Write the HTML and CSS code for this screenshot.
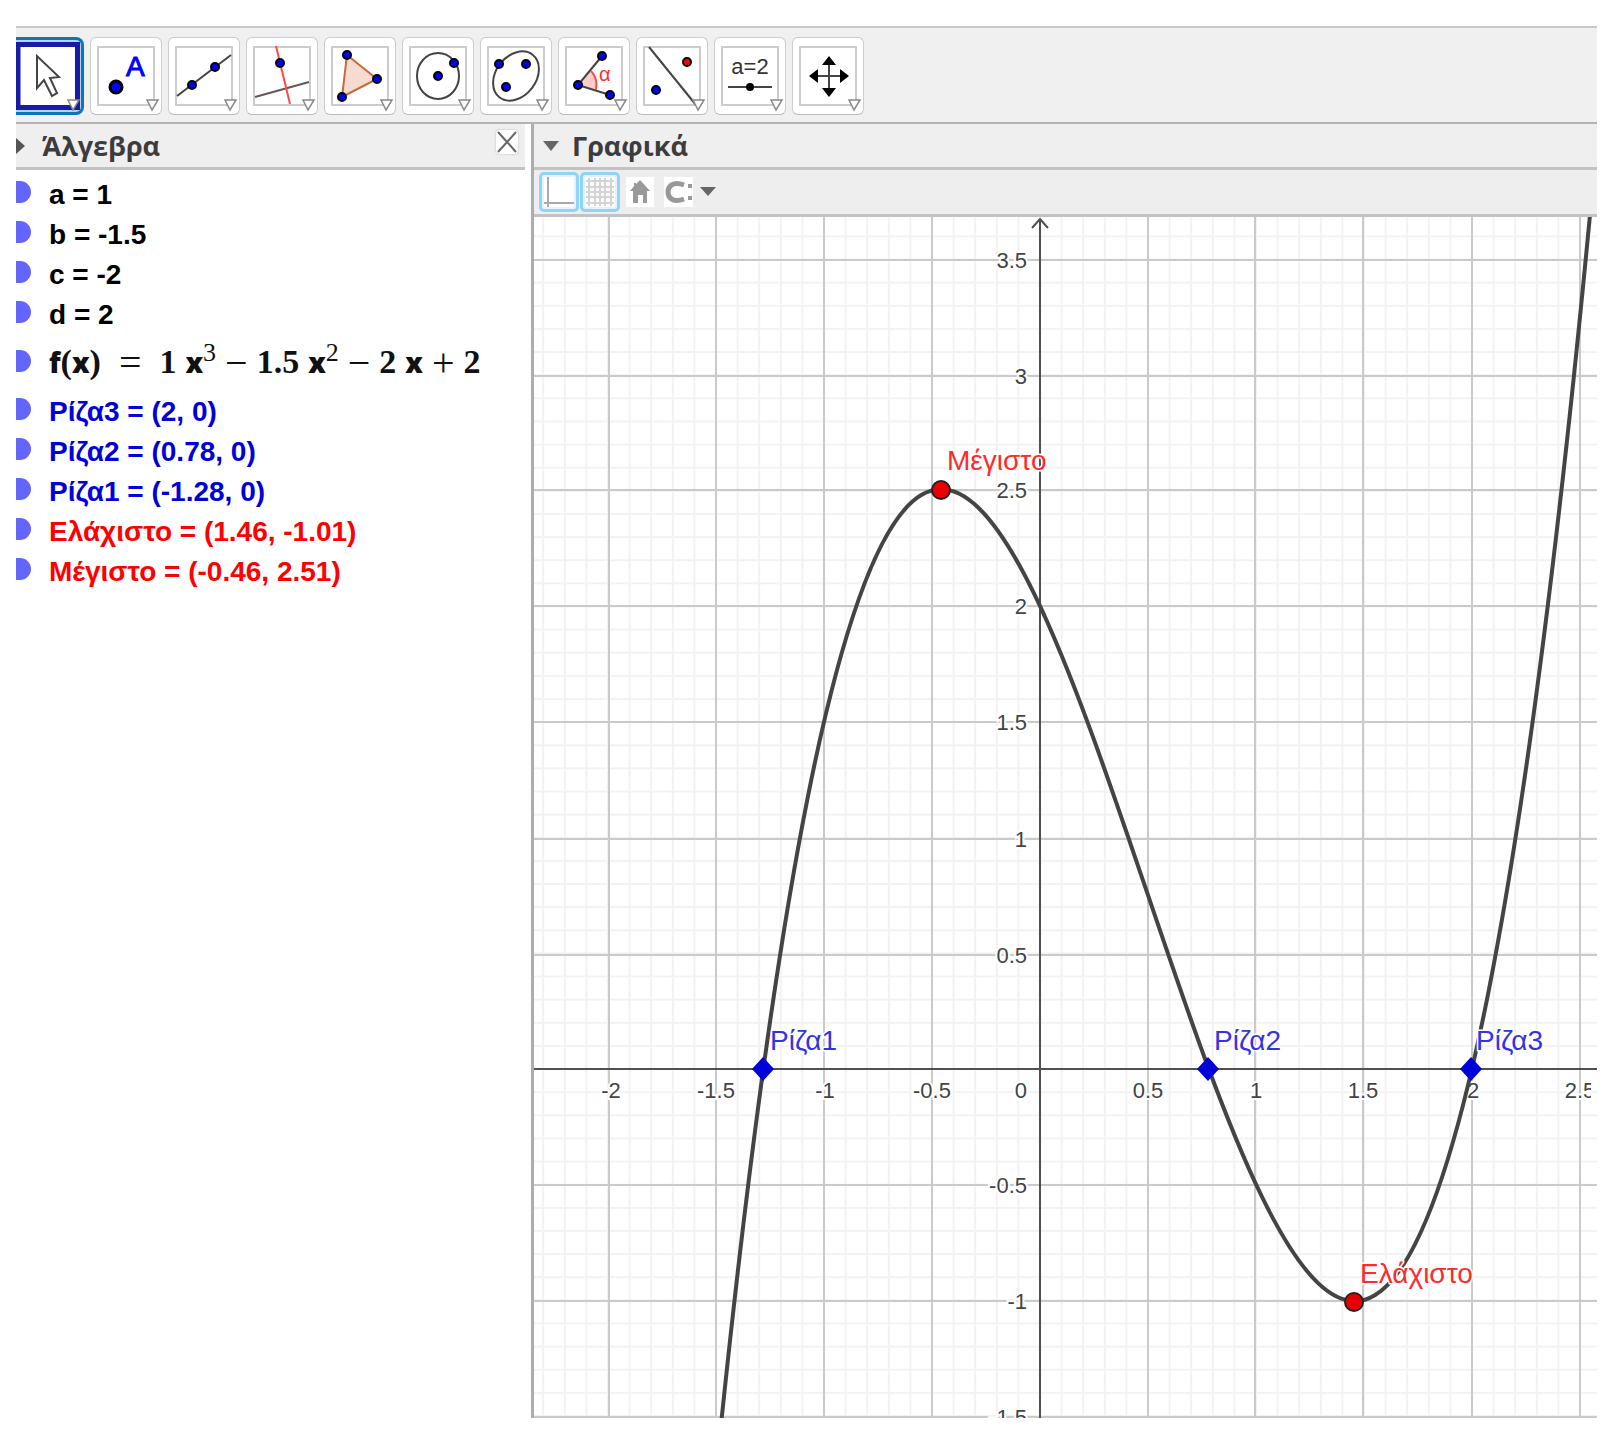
FILE: index.html
```html
<!DOCTYPE html>
<html lang="el">
<head>
<meta charset="utf-8">
<meta name="viewport" content="width=device-width, initial-scale=1">
<title>GeoGebra</title>
<link rel="stylesheet" href="styles.css">
</head>
<body>
<svg class="defs" aria-hidden="true">
  <defs>
    <g id="frame"><rect x="8" y="10" width="56" height="58" class="frame"/></g>
    <g id="more"><path d="M57 63H68L62 73Z" class="more"/></g>
    <g id="dot"><circle r="4" class="dot"/></g>
  </defs>
</svg>
<div class="app">
  <nav class="tools" aria-label="Εργαλεία">
    <button class="tool selected" aria-label="Μετακίνηση"><svg viewBox="0 0 65 72">
      <path d="M0 4.500H61.500V67.500H0" class="selected-frame"/><path d="M2 2V70" class="selected-frame"/>
      <path d="M21 16V48L28 40L36 56L41 53L34 38L43 37Z" class="cursor"/>
      <path d="M52 60H63L57 70Z" class="more"/></svg></button>
    <button class="tool" aria-label="Σημείο"><svg viewBox="1 1 70 76"><use href="#frame"/><circle cx="26" cy="50" r="6" class="dot big"/><text x="36" y="39" class="glyph-a">A</text><use href="#more"/></svg></button>
    <button class="tool" aria-label="Ευθεία"><svg viewBox="1 1 70 76"><use href="#frame"/><path d="M9 59L63 18" class="ink"/><use href="#dot" x="24" y="48"/><use href="#dot" x="47" y="30"/><use href="#more"/></svg></button>
    <button class="tool" aria-label="Κάθετη ευθεία"><svg viewBox="1 1 70 76"><use href="#frame"/><path d="M9 60L63 45" class="ink brown"/><path d="M30 9L44 67" class="ink red"/><use href="#dot" x="34" y="26"/><use href="#more"/></svg></button>
    <button class="tool" aria-label="Πολύγωνο"><svg viewBox="1 1 70 76"><use href="#frame"/><path d="M23 18L53 42L18 60Z" class="polygon"/><use href="#dot" x="23" y="18"/><use href="#dot" x="53" y="42"/><use href="#dot" x="18" y="60"/><use href="#more"/></svg></button>
    <button class="tool" aria-label="Κύκλος"><svg viewBox="1 1 70 76"><use href="#frame"/><ellipse cx="36" cy="39" rx="21" ry="23" class="ink"/><use href="#dot" x="36" y="39"/><use href="#dot" x="52" y="26"/><use href="#more"/></svg></button>
    <button class="tool" aria-label="Έλλειψη"><svg viewBox="1 1 70 76"><use href="#frame"/><ellipse cx="36" cy="39" rx="27" ry="20" transform="rotate(-52 36 39)" class="ink"/><use href="#dot" x="19" y="27"/><use href="#dot" x="46" y="27"/><use href="#dot" x="26" y="50"/><use href="#more"/></svg></button>
    <button class="tool" aria-label="Γωνία"><svg viewBox="1 1 70 76"><use href="#frame"/><path d="M20 48L33 34Q40 41 38 53Z" class="wedge"/><path d="M44 19L20 48L52 58" class="ink"/><path d="M33 34Q40 41 38 53" class="ink red"/><use href="#dot" x="20" y="48"/><use href="#dot" x="44" y="19"/><use href="#dot" x="52" y="58"/><text x="41" y="44" class="glyph-alpha">α</text><use href="#more"/></svg></button>
    <button class="tool" aria-label="Ανάκλαση"><svg viewBox="1 1 70 76"><use href="#frame"/><path d="M13 10L60 68" class="ink"/><use href="#dot" x="20" y="53"/><circle cx="51" cy="25" r="4" class="dot hot"/><use href="#more"/></svg></button>
    <button class="tool" aria-label="Δρομέας"><svg viewBox="1 1 70 76"><use href="#frame"/><text x="36" y="37" class="glyph-slider">a=2</text><path d="M14 50H58" class="ink"/><circle cx="36" cy="50" r="4"/><use href="#more"/></svg></button>
    <button class="tool" aria-label="Μετακίνηση γραφικών"><svg viewBox="1 1 70 76"><use href="#frame"/><path d="M24 39H50M37 27V52" class="ink"/><path d="M37 19L44 28H30ZM37 60L44 51H30ZM17 39L26 32V46ZM57 39L48 32V46Z"/><use href="#more"/></svg></button>
  </nav>
  <main class="views">
    <section class="algebra">
      <header class="bar">
        <svg class="tri-right" viewBox="0 0 9 16"><path d="M0 0L9 8L0 16Z"/></svg>
        <h2>Άλγεβρα</h2>
        <button class="close" aria-label="Κλείσιμο"><svg viewBox="0 0 22 24"><path d="M2 2L20 22M20 2L2 22"/></svg></button>
      </header>
      <ul class="objects">
        <li>a = 1</li>
        <li>b = -1.5</li>
        <li>c = -2</li>
        <li>d = 2</li>
        <li class="formula"><span class="math"><b>f</b>(<b>x</b>)<i class="wide">=</i>1<b class="var">x</b><sup>3</sup><i>−</i>1.5<b class="var">x</b><sup>2</sup><i>−</i>2<b class="var">x</b><i>+</i>2</span></li>
        <li class="root">Ρίζα3 = (2, 0)</li>
        <li class="root">Ρίζα2 = (0.78, 0)</li>
        <li class="root">Ρίζα1 = (-1.28, 0)</li>
        <li class="extremum">Ελάχιστο = (1.46, -1.01)</li>
        <li class="extremum">Μέγιστο = (-0.46, 2.51)</li>
      </ul>
    </section>
    <section class="graphics">
      <header class="bar">
        <svg class="tri-down" viewBox="0 0 16 10"><path d="M0 0H16L8 10Z"/></svg>
        <h2>Γραφικά</h2>
      </header>
      <div class="options">
        <button class="option on" aria-label="Άξονες"><svg viewBox="0 0 34 34"><rect x="2" y="2" width="30" height="30" fill="#fff"/><path d="M6 2V32M2 28H32" class="gray"/></svg></button>
        <button class="option on" aria-label="Πλέγμα"><svg viewBox="0 0 34 34"><rect x="2" y="2" width="30" height="30" fill="#fff"/><path d="M6 3V31M12 3V31M17 3V31M22 3V31M28 3V31M3 6H31M3 12H31M3 17H31M3 22H31M3 28H31" class="mesh"/></svg></button>
        <button class="option plain" aria-label="Αρχική προβολή"><svg viewBox="0 0 28 30"><path d="M14 3L24 14H21V26H17V18H12V26H7V14H4L8 9V6H10V7Z" fill="#999"/></svg></button>
        <button class="option snap" aria-label="Σύλληψη σημείου"><svg viewBox="0 0 52 30"><path d="M0 0H29V30H0Z" fill="#fff"/><path d="M20 8C9 4 4 9 4 15S9 26 20 22" fill="none" stroke="#999" stroke-width="5"/><path d="M24 7H28V11H24ZM24 19H28V23H24Z" fill="#999"/><path d="M36 10H52L44 19Z" fill="#666"/></svg></button>
      </div>
      <svg class="plot" viewBox="534 217 1063 1201" role="img" aria-label="Γραφική παράσταση">
        <defs>
          <pattern id="minor" patternUnits="userSpaceOnUse" x="1029.200" y="1057.500" width="21.600" height="23.130"><path d="M10.800 0V24M0 11.565H22" class="minor"/></pattern>
          <clipPath id="labels"><rect x="534" y="217" width="1057" height="1201"/></clipPath>
        </defs>
        <rect x="534" y="217" width="1063" height="1201" fill="url(#minor)"/>
        <path class="major" d="M609 217V1418M716 217V1418M824 217V1418M932 217V1418M1148 217V1418M1255 217V1418M1363 217V1418M1472 217V1418M1580 217V1418M534 260H1597M534 376H1597M534 490H1597M534 606H1597M534 722H1597M534 839H1597M534 955H1597M534 1185H1597M534 1301H1597M534 1417H1597"/>
        <path class="axis" d="M534 1069H1597M1040 1418V220M1032 228L1040 219L1048 228"/>
        <g class="ticks" clip-path="url(#labels)">
          <text x="611" y="1098">-2</text><text x="716" y="1098">-1.5</text><text x="825" y="1098">-1</text><text x="932" y="1098">-0.5</text>
          <text x="1148" y="1098">0.5</text><text x="1256" y="1098">1</text><text x="1363" y="1098">1.5</text><text x="1473" y="1098">2</text><text x="1580" y="1098">2.5</text>
          <g class="ticks-y">
            <text x="1027" y="268">3.5</text><text x="1027" y="384">3</text><text x="1027" y="498">2.5</text><text x="1027" y="614">2</text><text x="1027" y="730">1.5</text><text x="1027" y="847">1</text><text x="1027" y="963">0.5</text><text x="1027" y="1098">0</text><text x="1027" y="1193">-0.5</text><text x="1027" y="1309">-1</text><text x="1027" y="1425">-1.5</text>
          </g>
        </g>
        <path class="curve" d="M694.400 1701.500C996.800 -1692.100 1299.200 3482.500 1601.600 88.900"/>
        <path class="roots" d="M763 1057L774 1069L763 1081L752 1069ZM1208 1057L1219 1069L1208 1081L1197 1069ZM1471 1057L1482 1069L1471 1081L1460 1069Z"/>
        <circle class="peak" cx="941" cy="490" r="9"/><circle class="peak" cx="1354" cy="1302" r="9"/>
        <g class="names">
          <text x="770" y="1050">Ρίζα1</text><text x="1214" y="1050">Ρίζα2</text><text x="1476" y="1050">Ρίζα3</text>
          <text x="947" y="470" class="hot">Μέγιστο</text><text x="1360" y="1283" class="hot">Ελάχιστο</text>
        </g>
      </svg>
    </section>
  </main>
</div>
</body>
</html>
```
FILE: styles.css
```css
* { box-sizing: border-box; }
body { margin: 0; background: #fff; font-family: "Liberation Sans", Arial, sans-serif; color: #000; }
button { padding: 0; border: 0; background: none; font: inherit; }
svg { display: block; }
h2, ul { margin: 0; padding: 0; }
.defs { position: absolute; width: 0; height: 0; }
.app { padding: 26px 16px; }

.tools { display: flex; gap: 6px; padding: 9px 0 7px; overflow: hidden; background: #f0f0f0; border-top: 2px solid #c8c8c8; border-bottom: 2px solid #b2b2b2; }
.tool { flex: none; width: 72px; height: 78px; background: #fff; border: 1px solid #cdcdcd; border-bottom-color: #bbb; border-radius: 6px; }
.tool svg { width: 100%; height: 100%; }
.tool.selected { width: 68px; background: #b4d4f2; border: 3px solid #0a76b4; border-left: 0; border-radius: 0 8px 8px 0; }
.selected-frame { fill: none; stroke: #1a1aa8; stroke-width: 5; }
.tool.selected .selected-frame:first-child { fill: #fff; }
.cursor { fill: #fff; stroke: #444; stroke-width: 2; }
.frame { fill: #fff; stroke: #ccc; stroke-width: 2; }
.more { fill: #fff; stroke: #888; stroke-width: 1.5; }
.dot { fill: #00f; stroke: #000; stroke-width: 2; }
.dot.big { stroke-width: 3; }
.dot.hot { fill: #f00; }
.ink { fill: none; stroke: #444; stroke-width: 2; }
.ink.brown { stroke: #655; }
.ink.red { stroke: #ff4a4a; }
.polygon { fill: #f5dbd0; stroke: #c8693c; stroke-width: 2; }
.wedge { fill: #ffcccc; }
.glyph-a { font-size: 28px; fill: #00f; stroke: #00f; }
.glyph-alpha { font-size: 20px; fill: #f33; }
.glyph-slider { font-size: 22px; fill: #333; text-anchor: middle; }

.views { display: grid; grid-template-columns: 509px minmax(0, 1fr); column-gap: 6px; }
.graphics { border-left: 3px solid #adadad; }
.bar { display: flex; align-items: center; height: 46px; background: #efefef; border-bottom: 3px solid #c2c2c2; color: #3c3c3c; }
.bar h2 { font: 700 27px/40px "Open Sans", "Noto Sans", sans-serif; }
.tri-right { width: 9px; height: 16px; margin-right: 17px; fill: #555; }
.tri-down { width: 16px; height: 10px; margin: 0 13px 0 9px; fill: #666; }
.close { width: 22px; height: 24px; margin: 0 7px 8px auto; background: #fff; border-radius: 4px; box-shadow: 0 0 2px #aaa; }
.close svg { fill: none; stroke: #666; stroke-width: 2; }

.objects { padding-top: 5px; list-style: none; font-size: 28px; font-weight: 700; line-height: 40px; }
.objects li { display: flex; align-items: center; gap: 18px; white-space: nowrap; }
.objects li::before { content: ""; width: 15px; height: 22px; margin-bottom: 6px; background: #6464ff; border-radius: 0 11px 11px 0; }
.root { color: #0000d8; }
.extremum { color: #f00; }
.objects .formula { height: 57px; }
.math { padding-bottom: 4px; font-family: "Liberation Serif", serif; font-size: 34px; color: #111; }
.math b { font-family: "Open Sans", sans-serif; font-size: 28px; }
.math i { margin: 0 9px; font-style: normal; font-weight: 400; font-size: 40px; line-height: 32px; vertical-align: -3px; }
.math i.wide { margin: 0 18px; }
.math .var { margin-left: 9px; }
.math sup { font-size: 26px; font-weight: 400; line-height: 0; }

.options { display: flex; align-items: center; height: 47px; padding: 0 5px; background: #eee; border-bottom: 3px solid #c2c2c2; }
.option { width: 40px; height: 40px; margin-right: 1px; }
.option.on { background: #e4f4fe; border: 3px solid #90d4fc; border-radius: 5px; }
.option.plain { width: 28px; height: 30px; margin: 0 10px 0 5px; background: #fff; }
.option.snap { width: 52px; height: 30px; }
.gray { stroke: #aaa; stroke-width: 2; }
.mesh { stroke: #d4d4d4; stroke-width: 2; }

.plot { width: 100%; height: auto; }
.minor { fill: none; stroke: #f2f2f2; stroke-width: 2; }
.major { fill: none; stroke: #cacaca; stroke-width: 2; }
.axis { fill: none; stroke: #505050; stroke-width: 2; }
.curve { fill: none; stroke: #444; stroke-width: 4; }
.ticks { font-size: 22px; fill: #444; text-anchor: middle; paint-order: stroke; stroke: #fff; stroke-width: 4px; }
.ticks-y { text-anchor: end; }
.roots { fill: #0000d8; }
.peak { fill: #e80000; stroke: #222; stroke-width: 2; }
.names { font-size: 28px; fill: #3333e6; paint-order: stroke; stroke: #fff; stroke-width: 3px; }
.names .hot { fill: #ff2a2a; }
```
